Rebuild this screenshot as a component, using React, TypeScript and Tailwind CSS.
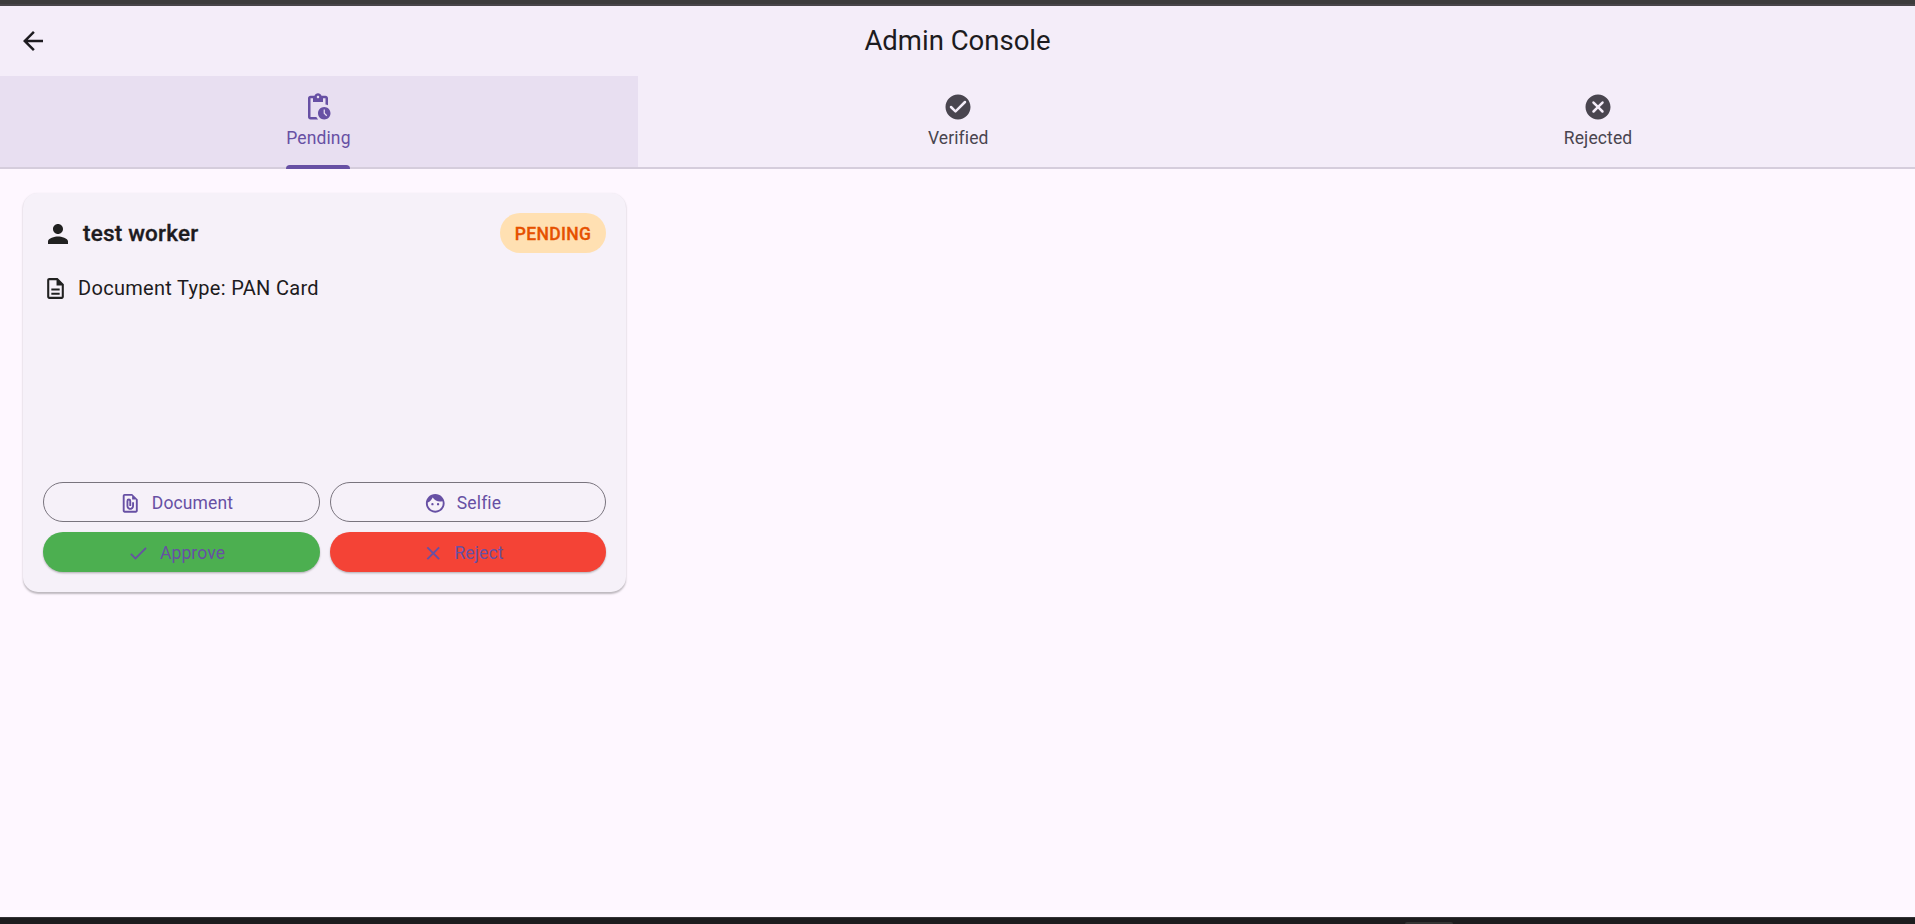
import type { ReactNode } from "react";
import {
  MdArrowBack,
  MdCheck,
  MdClose,
  MdFace,
  MdOutlineDescription,
  MdOutlineFilePresent,
  MdPerson,
  MdPendingActions,
} from "react-icons/md";

function CheckBadge() {
  return (
    <svg viewBox="0 0 24 24" className="size-[30px]" fill="currentColor">
      <path d="M12 2C6.48 2 2 6.48 2 12s4.48 10 10 10 10-4.48 10-10S17.52 2 12 2zM9.29 16.29 5.7 12.7a.996.996 0 1 1 1.41-1.41L10 14.17l6.88-6.88a.996.996 0 1 1 1.41 1.41l-7.59 7.59a.996.996 0 0 1-1.41 0z" />
    </svg>
  );
}

function CancelBadge() {
  return (
    <svg viewBox="0 0 24 24" className="size-[30px]" fill="currentColor">
      <path d="M12 2C6.47 2 2 6.47 2 12s4.47 10 10 10 10-4.47 10-10S17.53 2 12 2zm4.3 14.3a.996.996 0 0 1-1.41 0L12 13.41 9.11 16.3a.996.996 0 1 1-1.41-1.41L10.59 12 7.7 9.11A.996.996 0 1 1 9.11 7.7L12 10.59l2.89-2.89a.996.996 0 1 1 1.41 1.41L13.41 12l2.89 2.89c.38.38.38 1.02 0 1.41z" />
    </svg>
  );
}

function Tab({ icon, label, active = false }: { icon: ReactNode; label: string; active?: boolean }) {
  return (
    <button
      className={
        active
          ? "flex h-full flex-1 flex-col items-center bg-[#e8dff1] pt-4 text-[#6750a4]"
          : "flex h-full flex-1 flex-col items-center pt-4 text-[#49454f]"
      }
    >
      {icon}
      <span className="mt-1 text-[17.5px] leading-[25px] tracking-[0.125px]">{label}</span>
      {active && <span className="mt-auto -mb-0.5 h-1 w-16 rounded-t-[3.75px] bg-[#6750a4]" />}
    </button>
  );
}

function PillButton({ icon, label, look }: { icon: ReactNode; label: string; look: string }) {
  return (
    <button
      className={`flex h-10 flex-1 items-center justify-center gap-2.5 rounded-full pt-0.5 pr-2.5 text-[17.5px] leading-[25px] tracking-[0.125px] text-[#6750a4] ${look}`}
    >
      {icon}
      <span>{label}</span>
    </button>
  );
}

export default function App() {
  return (
    <div className="flex h-[924px] w-[1915px] flex-col overflow-hidden bg-[#fef7ff] font-['Roboto',sans-serif] text-[#1d1b20]">
      <div className="h-1.5 shrink-0 border-b-2 border-[#484549] bg-[#3c3c3c]" />
      <header className="grid h-[70px] shrink-0 grid-cols-[1fr_auto_1fr] items-center bg-[#f4edf9]">
        <button className="ml-[18px] w-fit">
          <MdArrowBack className="size-[30px]" />
        </button>
        <h1 className="pb-0.5 text-[27.5px] leading-[35px]">Admin Console</h1>
      </header>
      <nav className="-mr-[3px] -ml-[1.5px] flex h-[93px] shrink-0 border-b-2 border-[#d5cddc] bg-[#f4edf9]">
        <Tab active icon={<MdPendingActions className="size-[30px]" />} label="Pending" />
        <Tab icon={<CheckBadge />} label="Verified" />
        <Tab icon={<CancelBadge />} label="Rejected" />
      </nav>
      <main className="min-h-0 flex-1 pt-6 pl-[23px]">
        <section className="flex h-[399px] w-[603px] flex-col rounded-[15px] bg-[#f6f1f9] p-5 shadow-[0_1.5px_2px_rgba(0,0,0,0.26)]">
          <div className="flex h-10 items-center">
            <MdPerson className="mt-0.5 size-[30px] text-[#212121]" />
            <h2 className="mt-0.5 ml-2.5 flex-1 text-[22.5px] font-medium tracking-[0.2px] [-webkit-text-stroke:0.35px_currentColor]">
              test worker
            </h2>
            <span className="flex h-10 w-[106px] items-center justify-center rounded-full bg-[#ffe0b2] pt-0.5 text-[17.5px] font-medium tracking-[0.3px] text-[#e65100] [-webkit-text-stroke:0.3px_currentColor]">
              PENDING
            </span>
          </div>
          <div className="mt-5 flex h-[30px] items-center">
            <MdOutlineDescription className="size-[25px] text-[#212121]" />
            <p className="ml-2.5 text-[20px] tracking-[0.3px]">Document Type: PAN Card</p>
          </div>
          <div className="mt-auto flex flex-col gap-2.5">
            <div className="flex gap-2.5">
              <PillButton icon={<MdOutlineFilePresent className="size-[22.5px]" />} label="Document" look="border border-[#79747e]" />
              <PillButton icon={<MdFace className="size-[22.5px]" />} label="Selfie" look="border border-[#79747e]" />
            </div>
            <div className="flex gap-2.5">
              <PillButton icon={<MdCheck className="size-[22.5px]" />} label="Approve" look="bg-[#4caf50] shadow-[0_1.25px_2px_rgba(0,0,0,0.26)]" />
              <PillButton icon={<MdClose className="size-[22.5px]" />} label="Reject" look="bg-[#f44336] shadow-[0_1.25px_2px_rgba(0,0,0,0.26)]" />
            </div>
          </div>
        </section>
      </main>
      <footer className="flex h-[7px] shrink-0 flex-col border-t border-[#343236] bg-[#1d1c1e] pt-1 pl-[1405px]">
        <div className="h-1 w-[48px] rounded-t bg-[#353535]" />
      </footer>
    </div>
  );
}
